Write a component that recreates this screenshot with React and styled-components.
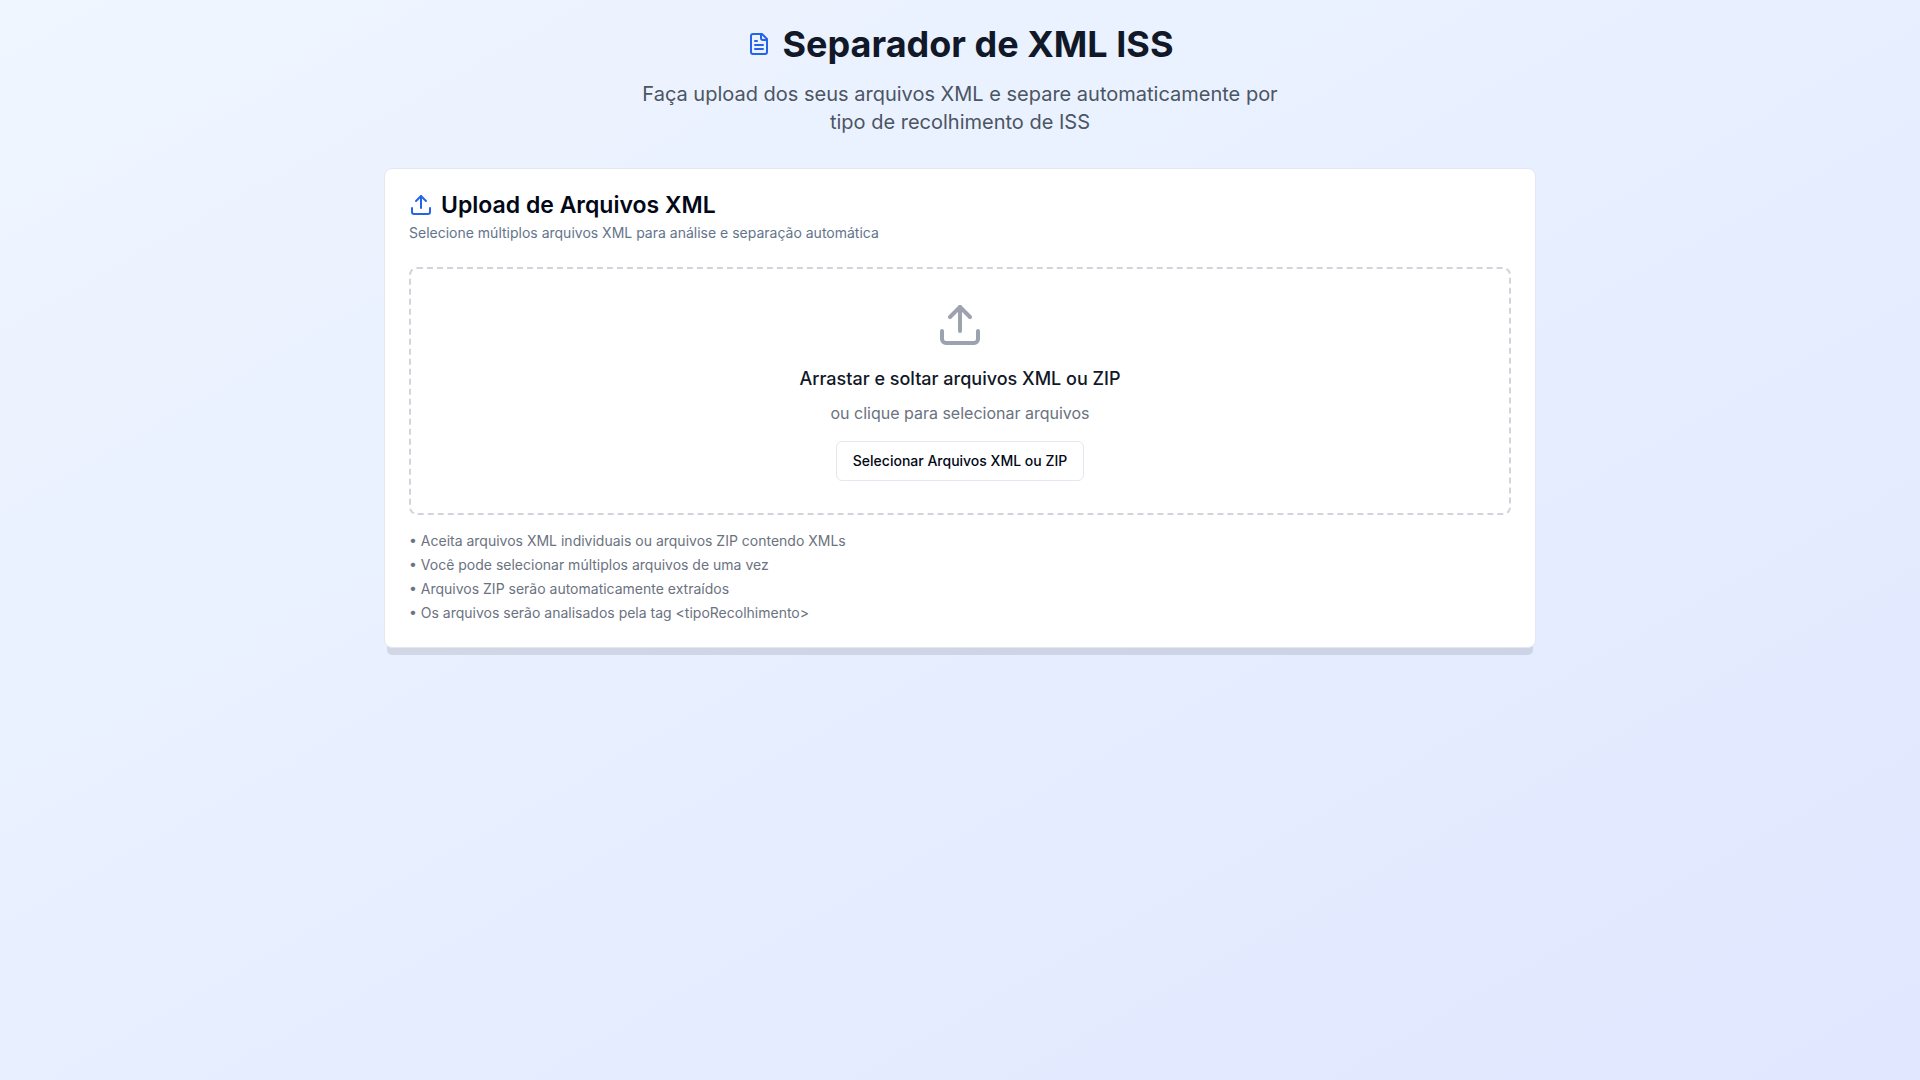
import React, { useRef, useState } from 'react';
import styled, { createGlobalStyle } from 'styled-components';
import { Upload } from 'lucide-react';

const GlobalStyle = createGlobalStyle`
  *, *::before, *::after {
    box-sizing: border-box;
  }

  body, h1, h2, p, ul {
    margin: 0;
    padding: 0;
  }

  body {
    font-family: Inter, "Liberation Sans", sans-serif;
    font-size: 16px;
    line-height: 24px;
    color: #020817;
    -webkit-font-smoothing: antialiased;
  }
`;

const Page = styled.div`
  min-height: 100vh;
  padding: 24px;
  background: linear-gradient(to bottom right, #eff6ff, #e0e7ff);
`;

const Container = styled.main`
  display: flex;
  flex-direction: column;
  gap: 32px;
  max-width: 1152px;
  margin: 0 auto;
`;

const Header = styled.header`
  display: flex;
  flex-direction: column;
  align-items: center;
  gap: 16px;
  text-align: center;
`;

const Title = styled.h1`
  display: flex;
  align-items: center;
  justify-content: center;
  gap: 12px;
  font-size: 36px;
  line-height: 40px;
  font-weight: 700;
  color: #111827;

  svg {
    flex-shrink: 0;
    color: #2563eb;
  }
`;

const Subtitle = styled.p`
  max-width: 672px;
  font-size: 20px;
  line-height: 28px;
  color: #4b5563;
`;

const Card = styled.section`
  display: flex;
  flex-direction: column;
  gap: 24px;
  padding: 24px;
  background-color: white;
  border: 1px solid #e2e8f0;
  border-radius: 8px;
  box-shadow: 0 10px 0 -3px rgba(0, 0, 0, 0.1);
`;

const CardHeader = styled.div`
  display: flex;
  flex-direction: column;
  gap: 6px;
`;

const CardTitle = styled.h2`
  display: flex;
  align-items: center;
  gap: 8px;
  font-size: 23px;
  line-height: 24px;
  font-weight: 600;

  svg {
    color: #2563eb;
  }
`;

const CardDescription = styled.p`
  font-size: 14px;
  line-height: 20px;
  color: #64748b;
`;

const CardContent = styled.div`
  display: flex;
  flex-direction: column;
  gap: 16px;
`;

const DropZone = styled.div`
  display: flex;
  flex-direction: column;
  align-items: center;
  padding: 32px;
  text-align: center;
  border: 2px dashed ${({ $active }) => ($active ? '#3b82f6' : '#d1d5db')};
  border-radius: 8px;

  svg {
    margin-bottom: 16px;
    color: #9ca3af;
  }
`;

const DropTitle = styled.p`
  margin-bottom: 8px;
  font-size: 18px;
  line-height: 28px;
  font-weight: 500;
  color: #111827;
`;

const DropHint = styled.p`
  margin-bottom: 16px;
  color: #6b7280;
`;

const SelectButton = styled.button`
  height: 40px;
  padding: 0 16px;
  font-family: inherit;
  font-size: 14px;
  line-height: 20px;
  font-weight: 500;
  color: #020817;
  background-color: white;
  border: 1px solid #e2e8f0;
  border-radius: 6px;
  cursor: pointer;

  &:hover {
    background-color: #f1f5f9;
  }
`;

const NoteList = styled.ul`
  display: flex;
  flex-direction: column;
  gap: 4px;
  list-style: none;
  font-size: 14px;
  line-height: 20px;
  color: #6b7280;
`;

const notes = [
  'Aceita arquivos XML individuais ou arquivos ZIP contendo XMLs',
  'Você pode selecionar múltiplos arquivos de uma vez',
  'Arquivos ZIP serão automaticamente extraídos',
  'Os arquivos serão analisados pela tag <tipoRecolhimento>',
];

const DocumentIcon = () => (
  <svg
    width="24"
    height="24"
    viewBox="0 0 24 24"
    fill="none"
    stroke="currentColor"
    strokeWidth="2"
    strokeLinecap="round"
    strokeLinejoin="round"
    aria-hidden="true"
  >
    <path d="M15 2H6a2 2 0 0 0-2 2v16a2 2 0 0 0 2 2h12a2 2 0 0 0 2-2V7Z" />
    <path d="M14 2v4a2 2 0 0 0 2 2h4" />
    <path d="M10 9H8" />
    <path d="M16 13H8" />
    <path d="M16 17H8" />
  </svg>
);

const UploadCard = () => {
  const inputRef = useRef(null);
  const [dragging, setDragging] = useState(false);

  const handleDragOver = (e) => {
    e.preventDefault();
    setDragging(true);
  };

  const handleDrop = (e) => {
    e.preventDefault();
    setDragging(false);
  };

  return (
    <Card>
      <CardHeader>
        <CardTitle>
          <Upload size={24} />
          Upload de Arquivos XML
        </CardTitle>
        <CardDescription>
          Selecione múltiplos arquivos XML para análise e separação automática
        </CardDescription>
      </CardHeader>
      <CardContent>
        <DropZone
          $active={dragging}
          onDragOver={handleDragOver}
          onDragLeave={() => setDragging(false)}
          onDrop={handleDrop}
        >
          <Upload size={48} />
          <DropTitle>Arrastar e soltar arquivos XML ou ZIP</DropTitle>
          <DropHint>ou clique para selecionar arquivos</DropHint>
          <input ref={inputRef} type="file" accept=".xml,.zip" multiple hidden />
          <SelectButton type="button" onClick={() => inputRef.current.click()}>
            Selecionar Arquivos XML ou ZIP
          </SelectButton>
        </DropZone>
        <NoteList>
          {notes.map((note) => (
            <li key={note}>• {note}</li>
          ))}
        </NoteList>
      </CardContent>
    </Card>
  );
};

const App = () => {
  return (
    <>
      <GlobalStyle />
      <Page>
        <Container>
          <Header>
            <Title>
              <DocumentIcon />
              Separador de XML ISS
            </Title>
            <Subtitle>
              Faça upload dos seus arquivos XML e separe automaticamente por tipo de
              recolhimento de ISS
            </Subtitle>
          </Header>
          <UploadCard />
        </Container>
      </Page>
    </>
  );
};

export default App;
